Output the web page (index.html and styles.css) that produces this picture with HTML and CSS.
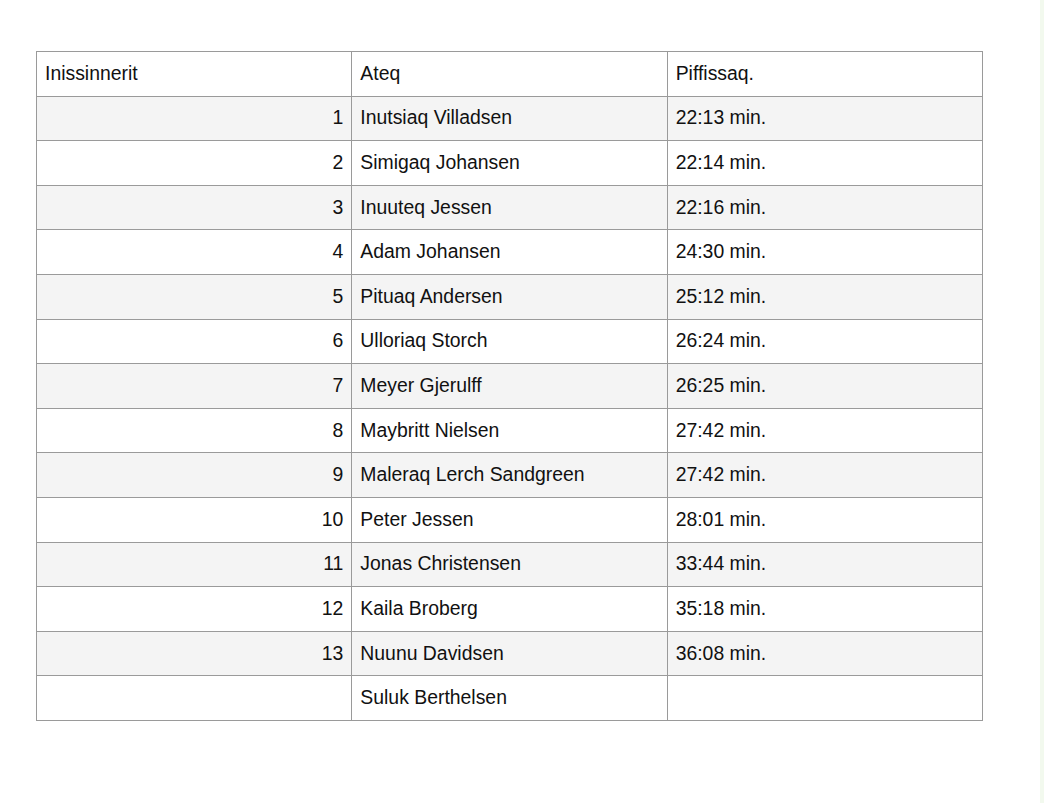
FILE: index.html
```html
<!DOCTYPE html>
<html lang="kl">
<head>
<meta charset="utf-8">
<title>Inissinnerit</title>
<link rel="stylesheet" href="styles.css">
</head>
<body>
<main class="page">
<table class="results">
<thead>
<tr><td>Inissinnerit</td><td>Ateq</td><td>Piffissaq.</td></tr>
</thead>
<tbody>
<tr><td class="num">1</td><td>Inutsiaq Villadsen</td><td>22:13 min.</td></tr>
<tr><td class="num">2</td><td>Simigaq Johansen</td><td>22:14 min.</td></tr>
<tr><td class="num">3</td><td>Inuuteq Jessen</td><td>22:16 min.</td></tr>
<tr><td class="num">4</td><td>Adam Johansen</td><td>24:30 min.</td></tr>
<tr><td class="num">5</td><td>Pituaq Andersen</td><td>25:12 min.</td></tr>
<tr><td class="num">6</td><td>Ulloriaq Storch</td><td>26:24 min.</td></tr>
<tr><td class="num">7</td><td>Meyer Gjerulff</td><td>26:25 min.</td></tr>
<tr><td class="num">8</td><td>Maybritt Nielsen</td><td>27:42 min.</td></tr>
<tr><td class="num">9</td><td>Maleraq Lerch Sandgreen</td><td>27:42 min.</td></tr>
<tr><td class="num">10</td><td>Peter Jessen</td><td>28:01 min.</td></tr>
<tr><td class="num">11</td><td>Jonas Christensen</td><td>33:44 min.</td></tr>
<tr><td class="num">12</td><td>Kaila Broberg</td><td>35:18 min.</td></tr>
<tr><td class="num">13</td><td>Nuunu Davidsen</td><td>36:08 min.</td></tr>
<tr><td class="num"></td><td>Suluk Berthelsen</td><td></td></tr>
</tbody>
</table>
</main>
</body>
</html>
```
FILE: styles.css
```css
html {
  background: #ffffff;
  box-shadow: inset -4px 0 0 #f2f9ee;
  min-height: 100%;
}
body {
  margin: 0;
  font-family: "Liberation Sans", Arial, Helvetica, sans-serif;
  color: #111111;
}
.page {
  padding: 51px 0 0 36px;
}
.results {
  border-collapse: collapse;
  table-layout: fixed;
  width: 947px;
  font-size: 19.4px;
}
.results td {
  border: 1px solid #9a9a9a;
  height: 41.6px;
  padding: 0 8px 2px 8px;
  vertical-align: middle;
  white-space: nowrap;
  line-height: 22px;
}
.results tbody tr:nth-child(odd) td {
  background: #f4f4f4;
}
.results td.num {
  text-align: right;
}
```
